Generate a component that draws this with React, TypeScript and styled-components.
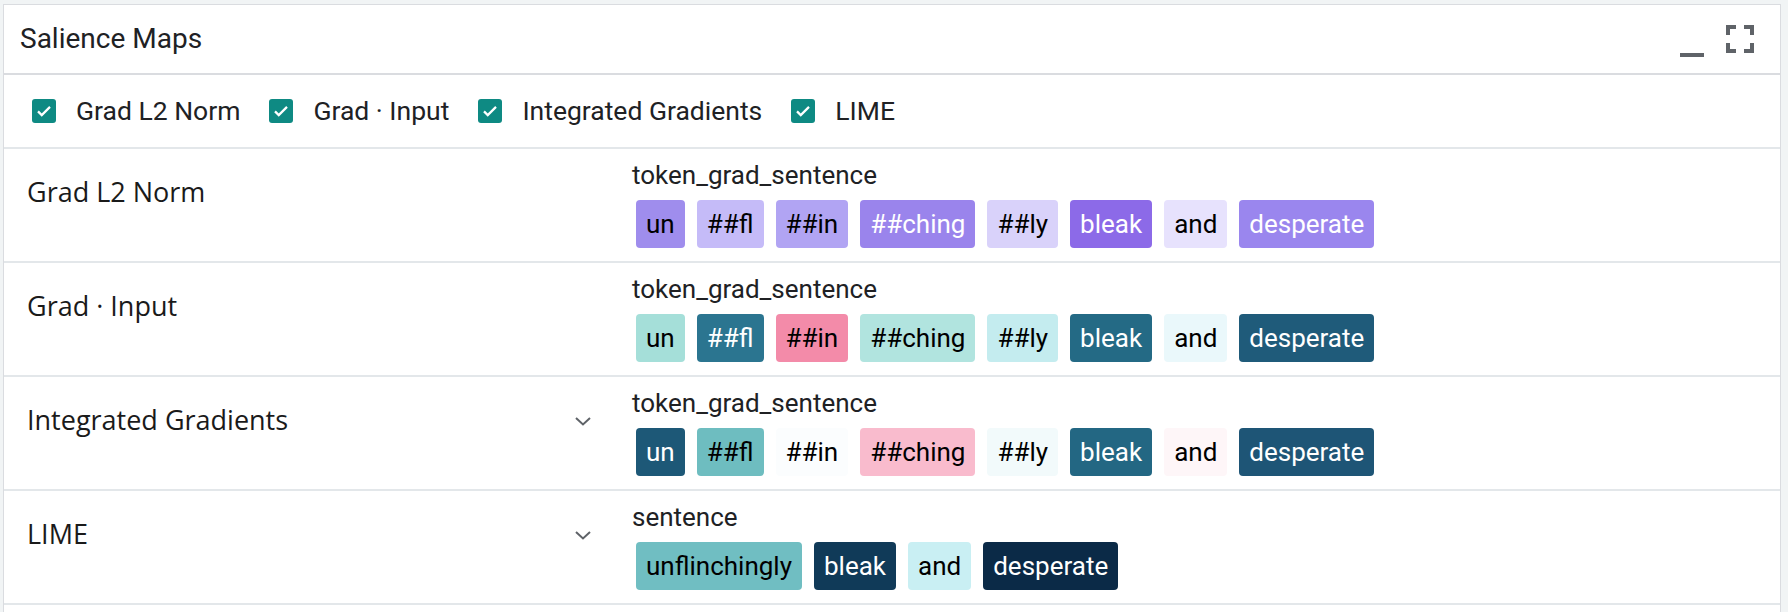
import React from 'react';
import styled, { createGlobalStyle } from 'styled-components';

const GlobalStyle = createGlobalStyle`
  html, body {
    margin: 0;
    padding: 0;
    background: #f1f4f5;
    overflow: hidden;
    font-family: Roboto, 'Liberation Sans', sans-serif;
    color: #202124;
  }
`;

const Page = styled.div`
  padding: 4px 7px 0 3px;
`;

const Panel = styled.div`
  min-height: 700px;
  background: #fff;
  border: 1px solid #dadce0;
`;

const Header = styled.div`
  height: 68px;
  display: flex;
  align-items: center;
  padding: 0 16px;
  border-bottom: 2px solid #dadce0;
`;

const Title = styled.div`
  flex: 1;
  font-size: 28px;
  line-height: 32px;
`;

const IconButton = styled.div`
  width: 48px;
  height: 48px;
  display: flex;
  align-items: center;
  justify-content: center;
  color: #5f6368;
  cursor: pointer;
`;

const CheckRow = styled.div`
  height: 72px;
  display: flex;
  align-items: center;
  padding-left: 28px;
  border-bottom: 2px solid #e3e7ea;
`;

const CheckItem = styled.label`
  display: flex;
  align-items: center;
  gap: 20px;
  margin-right: 29px;
  font-size: 26.5px;
  line-height: 30px;
  cursor: pointer;
`;

const Box = styled.span`
  width: 24px;
  height: 24px;
  border-radius: 3px;
  background: #0e8a83;
  display: flex;
  align-items: center;
  justify-content: center;
`;

const MapRow = styled.div`
  display: grid;
  grid-template-columns: 628px 1fr;
  height: 112px;
  border-bottom: 2px solid #e3e7ea;
`;

const MethodCell = styled.div`
  display: flex;
  justify-content: space-between;
  align-items: flex-start;
  padding: 26px 41px 0 23px;
`;

const MethodLabel = styled.div`
  font-family: 'Open Sans', Roboto, sans-serif;
  font-size: 27px;
  line-height: 34px;
  color: #1a1a1a;
`;

const Chevron = styled.div`
  height: 34px;
  display: flex;
  align-items: center;
  margin-top: 1px;
  color: #5f6368;
`;

const FieldCell = styled.div`
  padding-top: 11px;
`;

const FieldName = styled.div`
  font-size: 26px;
  line-height: 30px;
`;

const TokenList = styled.div`
  display: flex;
  flex-wrap: wrap;
  gap: 12px;
  margin-top: 10px;
  padding-left: 4px;
`;

const Token = styled.span<{ $bg: string; $light: boolean }>`
  height: 48px;
  line-height: 48px;
  padding: 0 10px;
  border-radius: 4px;
  font-size: 26px;
  background: ${(p) => p.$bg};
  color: ${(p) => (p.$light ? '#fff' : '#000')};
`;

type Tok = [string, string, boolean?];

interface IMap {
  name: string;
  field: string;
  menu: boolean;
  tokens: Tok[];
}

const maps: IMap[] = [
  {
    name: 'Grad L2 Norm',
    field: 'token_grad_sentence',
    menu: false,
    tokens: [
      ['un', '#9f8ded'],
      ['##fl', '#c5bbf8'],
      ['##in', '#b1a4f3'],
      ['##ching', '#9a84ec', true],
      ['##ly', '#d9d2fa'],
      ['bleak', '#8c6ae8', true],
      ['and', '#e7e2fd'],
      ['desperate', '#9a86ee', true],
    ],
  },
  {
    name: 'Grad \u00b7 Input',
    field: 'token_grad_sentence',
    menu: false,
    tokens: [
      ['un', '#a5dfd9'],
      ['##fl', '#2b7590', true],
      ['##in', '#f38ba9'],
      ['##ching', '#b1e4df'],
      ['##ly', '#c4ecef'],
      ['bleak', '#246a85', true],
      ['and', '#eaf8fb'],
      ['desperate', '#1f5b7a', true],
    ],
  },
  {
    name: 'Integrated Gradients',
    field: 'token_grad_sentence',
    menu: true,
    tokens: [
      ['un', '#1d5877', true],
      ['##fl', '#6ebdc0'],
      ['##in', '#fbfdfe'],
      ['##ching', '#f9bbcd'],
      ['##ly', '#f2fafb'],
      ['bleak', '#236783', true],
      ['and', '#fef6f8'],
      ['desperate', '#1e5576', true],
    ],
  },
  {
    name: 'LIME',
    field: 'sentence',
    menu: true,
    tokens: [
      ['unflinchingly', '#70bec2'],
      ['bleak', '#103a58', true],
      ['and', '#c9eff3'],
      ['desperate', '#0b2a47', true],
    ],
  },
];

const methods = ['Grad L2 Norm', 'Grad \u00b7 Input', 'Integrated Gradients', 'LIME'];

const CheckMark = () => (
  <svg width="18" height="18" viewBox="0 0 24 24">
    <path d="M4 12.5l5 5L20 6.5" fill="none" stroke="#fff" strokeWidth="3" />
  </svg>
);

const App = () => {
  return (
    <Page>
      <GlobalStyle />
      <Panel>
        <Header>
          <Title>Salience Maps</Title>
          <IconButton>
            <svg width="48" height="48" viewBox="0 0 24 24" fill="currentColor">
              <path d="M6 19h12v2H6z" />
            </svg>
          </IconButton>
          <IconButton>
            <svg width="48" height="48" viewBox="0 0 24 24" fill="currentColor">
              <path d="M7 14H5v5h5v-2H7v-3zm-2-4h2V7h3V5H5v5zm12 7h-3v2h5v-5h-2v3zM14 5v2h3v3h2V5h-5z" />
            </svg>
          </IconButton>
        </Header>
        <CheckRow>
          {methods.map((m) => (
            <CheckItem key={m}>
              <Box>
                <CheckMark />
              </Box>
              {m}
            </CheckItem>
          ))}
        </CheckRow>
        {maps.map((m) => (
          <MapRow key={m.name}>
            <MethodCell>
              <MethodLabel>{m.name}</MethodLabel>
              {m.menu && (
                <Chevron>
                  <svg width="16" height="9" viewBox="0 0 16 9">
                    <path d="M1 1l7 6.5L15 1" fill="none" stroke="currentColor" strokeWidth="2" />
                  </svg>
                </Chevron>
              )}
            </MethodCell>
            <FieldCell>
              <FieldName>{m.field}</FieldName>
              <TokenList>
                {m.tokens.map(([text, bg, light], i) => (
                  <Token key={i} $bg={bg} $light={!!light}>
                    {text}
                  </Token>
                ))}
              </TokenList>
            </FieldCell>
          </MapRow>
        ))}
      </Panel>
    </Page>
  );
};

export default App;
